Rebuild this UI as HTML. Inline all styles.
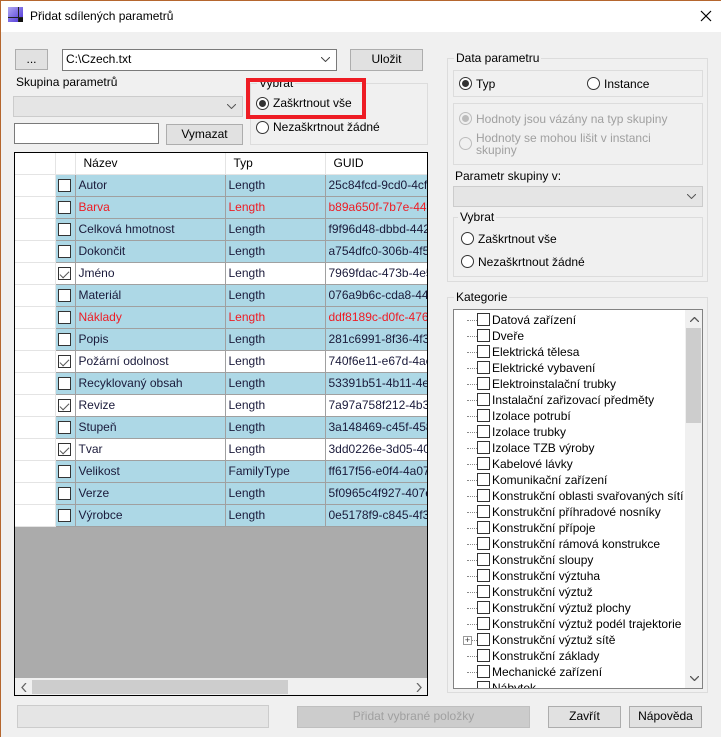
<!DOCTYPE html>
<html><head><meta charset="utf-8">
<style>
*{box-sizing:border-box;margin:0;padding:0}
body{width:721px;height:737px;overflow:hidden;background:#f0f0f0;font-family:"Liberation Sans",sans-serif;font-size:12px;color:#000;position:relative}
.a{position:absolute}
.btn{position:absolute;background:#e1e1e1;border:1px solid #adadad;text-align:center;line-height:19px;font-size:12px}
.grp{position:absolute;border:1px solid #dcdcdc}
.lg{position:absolute;background:#f0f0f0;padding:0 2px;top:-8px;left:6px;line-height:14px}
.rad{position:absolute;width:13px;height:13px;border:1px solid #333;border-radius:50%;background:#fff}
.rad.on::after{content:"";position:absolute;left:2px;top:2px;width:7px;height:7px;border-radius:50%;background:#333}
.rad.dis{border-color:#bcbcbc;background:#f0f0f0}
.rad.dis.on::after{background:#bcbcbc}
table{border-collapse:collapse;table-layout:fixed;position:absolute;left:0;top:0;width:430px}
td{height:22px;border:1px solid #a0a0a0;padding:0 0 0 3px;white-space:nowrap;overflow:hidden;color:#1a1a3a;background:#add8e6}
td.rh{background:#fff;border:1px solid #e4e4e4;border-left:none}
td.cb{padding-left:2px}
tr.w td{background:#fff}
tr.r td{color:#ee1c24}
tr.r td.cb,tr.r td.rh{color:#000}
.ck{display:inline-block;width:13px;height:13px;border:1px solid #333;background:#fff;vertical-align:middle;position:relative}
.ck.on::after{content:"";position:absolute;left:3px;top:1px;width:4px;height:8px;border:solid #555;border-width:0 1.5px 1.5px 0;transform:rotate(45deg)}
th{height:21px;background:#fff;font-weight:normal;text-align:left;padding-left:8px;border-right:1px solid #e4e4e4;border-bottom:1px solid #e4e4e4}
.ti{position:absolute;left:0;height:16px;line-height:16px;white-space:nowrap}
.ti .dl{position:absolute;left:13px;top:8px;width:10px;border-top:1px dotted #888}
.ti .vb{position:absolute;left:23px;top:1px;width:13px;height:13px;border:1px solid #333;background:#fff}
.ti span.t{position:absolute;left:38px;top:0}
</style></head><body>
<div class="a" style="left:0;top:0;width:721px;height:1px;background:#b5662e"></div>
<div class="a" style="left:0;top:0;width:1px;height:737px;background:#b5662e"></div>
<div class="a" style="left:1px;top:1px;width:720px;height:31px;background:#fff"></div>
<div class="a" style="left:8px;top:7px;width:15px;height:15px;background:linear-gradient(135deg,#b0a8f0,#4a2fd8)"></div>
<div class="a" style="left:8px;top:17px;width:15px;height:1px;background:#222"></div>
<div class="a" style="left:18px;top:7px;width:1px;height:15px;background:#222"></div>
<div class="a" style="left:19px;top:18px;width:4px;height:4px;background:#111"></div>
<div class="a" style="left:30px;top:9px;font-size:12px">Přidat sdílených parametrů</div>
<svg class="a" style="left:700px;top:10px" width="12" height="12"><path d="M1 1L11 11M11 1L1 11" stroke="#000" stroke-width="1.2"/></svg>

<div class="btn" style="left:15px;top:49px;width:33px;height:21px">...</div>
<div class="a" style="left:62px;top:49px;width:275px;height:22px;background:#fff;border:1px solid #7a7a7a;padding:2px 3px">C:\Czech.txt<svg style="position:absolute;right:6px;top:7px" width="9" height="5"><path d="M0 0L4.5 4.5L9 0" stroke="#444" fill="none"/></svg></div>
<div class="btn" style="left:350px;top:49px;width:73px;height:22px">Uložit</div>

<div class="a" style="left:16px;top:75px">Skupina parametrů</div>
<div class="a" style="left:13px;top:96px;width:230px;height:21px;background:#e5e5e5;border:1px solid #ccc"><svg style="position:absolute;right:6px;top:7px" width="9" height="5"><path d="M0 0L4.5 4.5L9 0" stroke="#555" fill="none"/></svg></div>
<div class="a" style="left:14px;top:123px;width:145px;height:21px;background:#fff;border:1px solid #7a7a7a"></div>
<div class="btn" style="left:166px;top:124px;width:77px;height:21px">Vymazat</div>

<div class="grp" style="left:250px;top:83px;width:178px;height:62px"><div class="lg">Vybrat</div></div>
<div class="rad on" style="left:256px;top:97px"></div>
<div class="a" style="left:273px;top:96px">Zaškrtnout vše</div>
<div class="rad" style="left:256px;top:121px"></div>
<div class="a" style="left:273px;top:120px">Nezaškrtnout žádné</div>
<div class="a" style="left:246px;top:78px;width:120px;height:41px;border:4px solid #ee1c24"></div>

<div class="a" style="left:14px;top:152px;width:414px;height:544px;border:1px solid #000;background:#ababab;overflow:hidden">
<table>
<colgroup><col style="width:40px"><col style="width:20px"><col style="width:150px"><col style="width:100px"><col style="width:120px"></colgroup>
<tr><th style="border-right:1px solid #e4e4e4"></th><th></th><th>Název</th><th>Typ</th><th>GUID</th></tr>
<tr><td class="rh"></td><td class="cb"><span class="ck"></span></td><td>Autor</td><td>Length</td><td>25c84fcd-9cd0-4cfa-</td></tr>
<tr class="r"><td class="rh"></td><td class="cb"><span class="ck"></span></td><td>Barva</td><td>Length</td><td>b89a650f-7b7e-44ff-8</td></tr>
<tr><td class="rh"></td><td class="cb"><span class="ck"></span></td><td>Celková hmotnost</td><td>Length</td><td>f9f96d48-dbbd-4424-</td></tr>
<tr><td class="rh"></td><td class="cb"><span class="ck"></span></td><td>Dokončit</td><td>Length</td><td>a754dfc0-306b-4f5f-b</td></tr>
<tr class="w"><td class="rh"></td><td class="cb"><span class="ck on"></span></td><td>Jméno</td><td>Length</td><td>7969fdac-473b-4e59</td></tr>
<tr><td class="rh"></td><td class="cb"><span class="ck"></span></td><td>Materiál</td><td>Length</td><td>076a9b6c-cda8-44ea</td></tr>
<tr class="r"><td class="rh"></td><td class="cb"><span class="ck"></span></td><td>Náklady</td><td>Length</td><td>ddf8189c-d0fc-4764-</td></tr>
<tr><td class="rh"></td><td class="cb"><span class="ck"></span></td><td>Popis</td><td>Length</td><td>281c6991-8f36-4f34-</td></tr>
<tr class="w"><td class="rh"></td><td class="cb"><span class="ck on"></span></td><td>Požární odolnost</td><td>Length</td><td>740f6e11-e67d-4ae7</td></tr>
<tr><td class="rh"></td><td class="cb"><span class="ck"></span></td><td>Recyklovaný obsah</td><td>Length</td><td>53391b51-4b11-4e8a</td></tr>
<tr class="w"><td class="rh"></td><td class="cb"><span class="ck on"></span></td><td>Revize</td><td>Length</td><td>7a97a758f212-4b3d</td></tr>
<tr><td class="rh"></td><td class="cb"><span class="ck"></span></td><td>Stupeň</td><td>Length</td><td>3a148469-c45f-458a</td></tr>
<tr class="w"><td class="rh"></td><td class="cb"><span class="ck on"></span></td><td>Tvar</td><td>Length</td><td>3dd0226e-3d05-402a</td></tr>
<tr><td class="rh"></td><td class="cb"><span class="ck"></span></td><td>Velikost</td><td>FamilyType</td><td>ff617f56-e0f4-4a07-a</td></tr>
<tr><td class="rh"></td><td class="cb"><span class="ck"></span></td><td>Verze</td><td>Length</td><td>5f0965c4f927-407e-</td></tr>
<tr><td class="rh"></td><td class="cb"><span class="ck"></span></td><td>Výrobce</td><td>Length</td><td>0e5178f9-c845-4f3c-</td></tr>
</table>
<div class="a" style="left:0;top:525px;width:412px;height:17px;background:#f0f0f0"></div>
<div class="a" style="left:17px;top:527px;width:256px;height:14px;background:#cdcdcd"></div>
<svg class="a" style="left:6px;top:530px" width="6" height="9"><path d="M5 0L1 4.5L5 9" stroke="#666" fill="none" stroke-width="1.3"/></svg>
<svg class="a" style="left:401px;top:530px" width="6" height="9"><path d="M1 0L5 4.5L1 9" stroke="#666" fill="none" stroke-width="1.3"/></svg>
</div>

<!-- Right panel -->
<div class="grp" style="left:447px;top:58px;width:261px;height:224px"><div class="lg">Data parametru</div></div>
<div class="grp" style="left:453px;top:70px;width:250px;height:27px"></div>
<div class="rad on" style="left:459px;top:77px"></div><div class="a" style="left:476px;top:77px">Typ</div>
<div class="rad" style="left:587px;top:77px"></div><div class="a" style="left:604px;top:77px">Instance</div>
<div class="grp" style="left:453px;top:103px;width:250px;height:62px"></div>
<div class="rad dis on" style="left:459px;top:112px"></div><div class="a" style="left:476px;top:112px;color:#a0a0a0">Hodnoty jsou vázány na typ skupiny</div>
<div class="rad dis" style="left:459px;top:137px"></div><div class="a" style="left:476px;top:132px;color:#a0a0a0;line-height:12px">Hodnoty se mohou lišit v instanci<br>skupiny</div>
<div class="a" style="left:455px;top:169px">Parametr skupiny v:</div>
<div class="a" style="left:453px;top:186px;width:250px;height:21px;background:#e5e5e5;border:1px solid #ccc"><svg style="position:absolute;right:6px;top:7px" width="9" height="5"><path d="M0 0L4.5 4.5L9 0" stroke="#555" fill="none"/></svg></div>
<div class="grp" style="left:453px;top:217px;width:250px;height:60px"><div class="lg" style="left:4px">Vybrat</div></div>
<div class="rad" style="left:461px;top:232px"></div><div class="a" style="left:478px;top:232px">Zaškrtnout vše</div>
<div class="rad" style="left:461px;top:255px"></div><div class="a" style="left:478px;top:255px">Nezaškrtnout žádné</div>

<div class="grp" style="left:447px;top:297px;width:261px;height:396px"><div class="lg">Kategorie</div></div>
<div class="a" style="left:453px;top:309px;width:250px;height:380px;background:#fff;border:1px solid #828282;overflow:hidden">
<div class="a" style="left:231px;top:0;width:17px;height:378px;background:#f0f0f0"></div>
<div class="a" style="left:232px;top:18px;width:15px;height:95px;background:#cdcdcd"></div>
<svg class="a" style="left:236px;top:7px" width="9" height="5"><path d="M0 5L4.5 0.5L9 5" stroke="#555" fill="none" stroke-width="1.3"/></svg>
<svg class="a" style="left:236px;top:366px" width="9" height="5"><path d="M0 0L4.5 4.5L9 0" stroke="#555" fill="none" stroke-width="1.3"/></svg>
<div class="a" style="left:0;top:2px;width:230px">
<div class="ti" style="top:0"><i class="dl"></i><i class="vb"></i><span class="t">Datová zařízení</span></div>
<div class="ti" style="top:16px"><i class="dl"></i><i class="vb"></i><span class="t">Dveře</span></div>
<div class="ti" style="top:32px"><i class="dl"></i><i class="vb"></i><span class="t">Elektrická tělesa</span></div>
<div class="ti" style="top:48px"><i class="dl"></i><i class="vb"></i><span class="t">Elektrické vybavení</span></div>
<div class="ti" style="top:64px"><i class="dl"></i><i class="vb"></i><span class="t">Elektroinstalační trubky</span></div>
<div class="ti" style="top:80px"><i class="dl"></i><i class="vb"></i><span class="t">Instalační zařizovací předměty</span></div>
<div class="ti" style="top:96px"><i class="dl"></i><i class="vb"></i><span class="t">Izolace potrubí</span></div>
<div class="ti" style="top:112px"><i class="dl"></i><i class="vb"></i><span class="t">Izolace trubky</span></div>
<div class="ti" style="top:128px"><i class="dl"></i><i class="vb"></i><span class="t">Izolace TZB výroby</span></div>
<div class="ti" style="top:144px"><i class="dl"></i><i class="vb"></i><span class="t">Kabelové lávky</span></div>
<div class="ti" style="top:160px"><i class="dl"></i><i class="vb"></i><span class="t">Komunikační zařízení</span></div>
<div class="ti" style="top:176px"><i class="dl"></i><i class="vb"></i><span class="t">Konstrukční oblasti svařovaných sítí</span></div>
<div class="ti" style="top:192px"><i class="dl"></i><i class="vb"></i><span class="t">Konstrukční příhradové nosníky</span></div>
<div class="ti" style="top:208px"><i class="dl"></i><i class="vb"></i><span class="t">Konstrukční přípoje</span></div>
<div class="ti" style="top:224px"><i class="dl"></i><i class="vb"></i><span class="t">Konstrukční rámová konstrukce</span></div>
<div class="ti" style="top:240px"><i class="dl"></i><i class="vb"></i><span class="t">Konstrukční sloupy</span></div>
<div class="ti" style="top:256px"><i class="dl"></i><i class="vb"></i><span class="t">Konstrukční výztuha</span></div>
<div class="ti" style="top:272px"><i class="dl"></i><i class="vb"></i><span class="t">Konstrukční výztuž</span></div>
<div class="ti" style="top:288px"><i class="dl"></i><i class="vb"></i><span class="t">Konstrukční výztuž plochy</span></div>
<div class="ti" style="top:304px"><i class="dl"></i><i class="vb"></i><span class="t">Konstrukční výztuž podél trajektorie</span></div>
<div class="ti" style="top:320px"><i class="dl"></i><i class="vb"></i><span class="t">Konstrukční výztuž sítě</span><i class="a" style="left:9px;top:4px;width:9px;height:9px;border:1px solid #999;background:#fff;font-size:9px;line-height:7px;text-align:center;font-style:normal;color:#333">+</i></div>
<div class="ti" style="top:336px"><i class="dl"></i><i class="vb"></i><span class="t">Konstrukční základy</span></div>
<div class="ti" style="top:352px"><i class="dl"></i><i class="vb"></i><span class="t">Mechanické zařízení</span></div>
<div class="ti" style="top:368px"><i class="dl"></i><i class="vb"></i><span class="t">Nábytek</span></div>
</div>
</div>

<div class="a" style="left:17px;top:705px;width:252px;height:23px;background:#e5e5e5;border:1px solid #ccc"></div>
<div class="btn" style="left:297px;top:706px;width:233px;height:22px;background:#cccccc;border-color:#bfbfbf;color:#a0a0a0">Přidat vybrané položky</div>
<div class="btn" style="left:548px;top:706px;width:73px;height:22px">Zavřít</div>
<div class="btn" style="left:629px;top:706px;width:73px;height:22px">Nápověda</div>
</body></html>
